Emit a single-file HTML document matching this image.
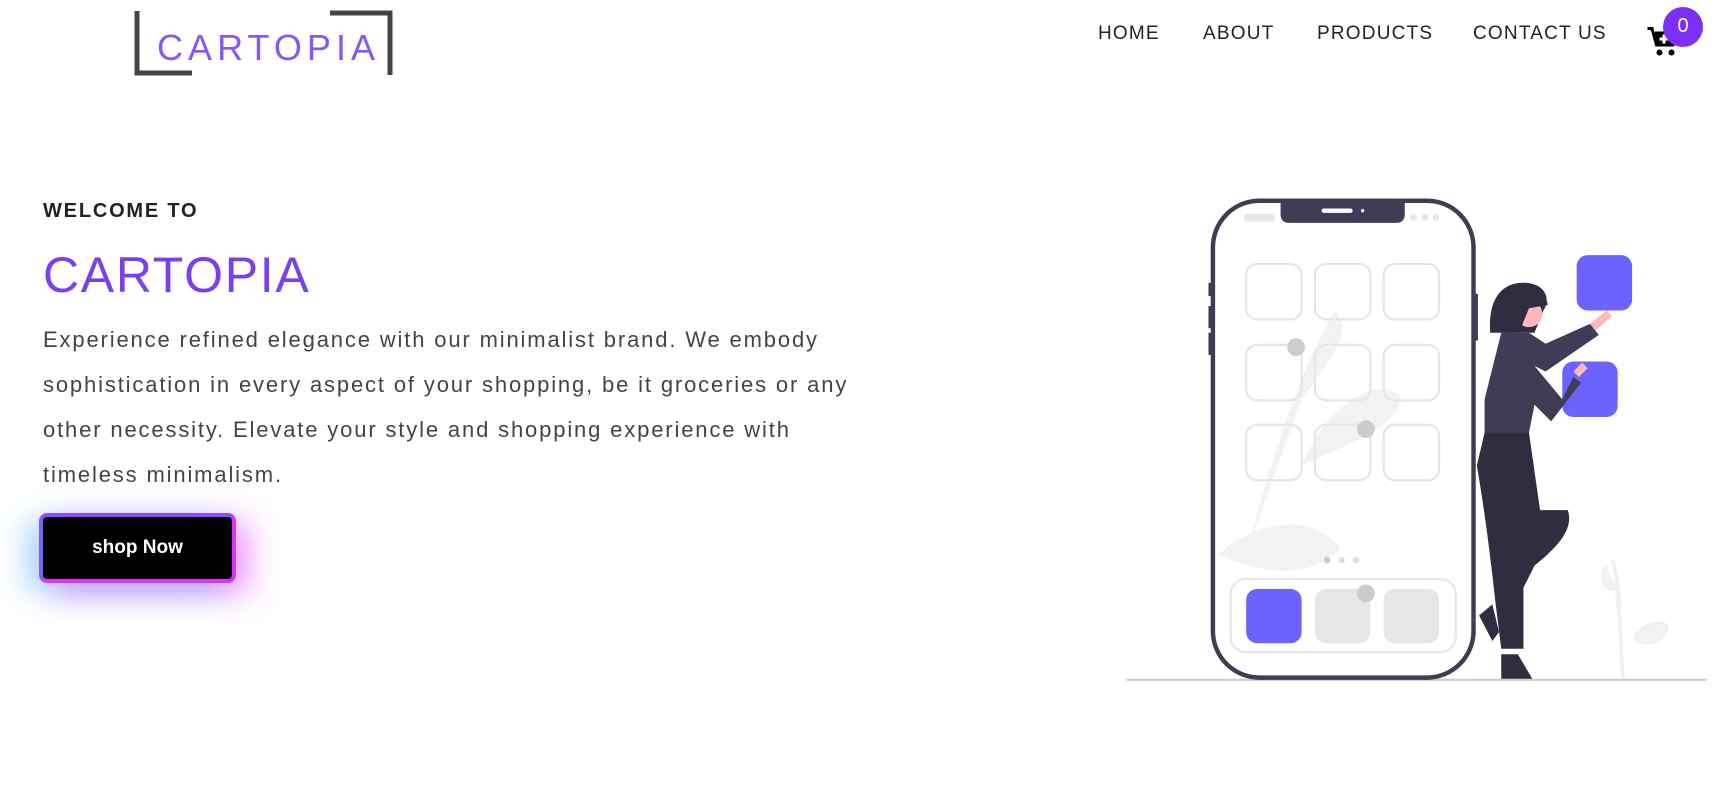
<!DOCTYPE html>
<html><head><meta charset="utf-8"><style>
*{margin:0;padding:0;box-sizing:border-box}
body{width:1730px;height:801px;background:#fff;font-family:"Liberation Sans",sans-serif;position:relative;overflow:hidden}
.nav a{position:absolute;top:23px;font-size:19px;letter-spacing:1.2px;color:#222;text-decoration:none;font-weight:300}
.h5{position:absolute;left:43px;top:200px;font-size:20px;font-weight:bold;letter-spacing:1.8px;color:#222}
.h1{position:absolute;left:43px;top:246px;font-size:50px;letter-spacing:1.7px;color:#7b3ff2}
.p{position:absolute;left:43px;top:317px;width:850px;font-size:22px;line-height:45px;letter-spacing:1.85px;color:#444;font-weight:300}
.btn{position:absolute;left:39px;top:513px;width:197px;height:70px;border-radius:8px;background:#000;border:4px solid;border-color:#8a4dff #e030ff #e030ff #7b5cff;color:#fff;font-weight:bold;font-size:19px;display:flex;align-items:center;justify-content:center;box-shadow:-14px 8px 30px rgba(80,180,255,.45),14px 10px 30px rgba(230,60,255,.5)}
</style></head><body>
<svg style="position:absolute;left:0;top:0" width="1730" height="801">
<path d="M137 11V73H192" fill="none" stroke="#444" stroke-width="5"/>
<path d="M330 13H390V75" fill="none" stroke="#444" stroke-width="5"/>
<text x="157" y="60" font-family="Liberation Sans" font-size="36" fill="#8a55f5" textLength="218" lengthAdjust="spacing">CARTOPIA</text>
<g transform="translate(-7,0) scale(1.109)">
<line x1="1022" y1="613" x2="1545" y2="613" stroke="#ccc" stroke-width="2"/>
<path d="M1130 500 C1150 420 1180 330 1210 280 C1230 300 1200 330 1180 360 M1180 420 C1210 350 1260 340 1270 360 C1260 390 1220 400 1180 420 M1105 500 C1150 460 1200 470 1215 495 C1190 520 1150 520 1105 500" fill="#f2f2f2"/>
<path d="M1470 612 C1465 560 1470 530 1460 505 M1455 510 c-8 10 0 25 8 20 M1480 575 c10 -15 25 -15 30 -10 c-5 15 -20 20 -30 10" fill="#f2f2f2" stroke="#f0f0f0" stroke-width="3"/>
<rect x="1100" y="181" width="235" height="430" rx="42" fill="none" stroke="#3f3d56" stroke-width="4"/>
<rect x="1096" y="255" width="4" height="12" fill="#3f3d56"/><rect x="1096" y="276" width="4" height="20" fill="#3f3d56"/><rect x="1096" y="300" width="4" height="20" fill="#3f3d56"/><rect x="1335" y="265" width="4" height="42" fill="#3f3d56"/>
<path d="M1161 181H1273V193Q1273 201 1265 201H1169Q1161 201 1161 193Z" fill="#3f3d56"/>
<rect x="1198" y="188" width="28" height="4" rx="2" fill="#fff"/><circle cx="1235" cy="190" r="1.5" fill="#fff"/>
<rect x="1128" y="193" width="28" height="7" rx="3" fill="#e6e6e6"/>
<circle cx="1281" cy="196" r="3" fill="#e6e6e6"/><circle cx="1291" cy="196" r="3" fill="#e6e6e6"/><circle cx="1301" cy="196" r="3" fill="#e6e6e6"/>
<g fill="none" stroke="#e6e6e6" stroke-width="2">
<rect x="1130" y="238" width="50" height="50" rx="10"/><rect x="1192" y="238" width="50" height="50" rx="10"/><rect x="1254" y="238" width="50" height="50" rx="10"/>
<rect x="1130" y="311" width="50" height="50" rx="10"/><rect x="1192" y="311" width="50" height="50" rx="10"/><rect x="1254" y="311" width="50" height="50" rx="10"/>
<rect x="1130" y="383" width="50" height="50" rx="10"/><rect x="1192" y="383" width="50" height="50" rx="10"/><rect x="1254" y="383" width="50" height="50" rx="10"/>
<rect x="1116" y="522" width="203" height="66" rx="14"/></g>
<rect x="1130" y="531" width="50" height="49" rx="10" fill="#6c63ff"/><rect x="1192" y="531" width="50" height="49" rx="10" fill="#e6e6e6"/><rect x="1254" y="531" width="50" height="49" rx="10" fill="#e6e6e6"/>
<circle cx="1203" cy="505" r="3" fill="#ccc"/><circle cx="1216" cy="505" r="3" fill="#e0e0e0"/><circle cx="1229" cy="505" r="3" fill="#e0e0e0"/>
<circle cx="1175" cy="313" r="8" fill="#ccc"/><circle cx="1238" cy="387" r="8" fill="#ccc"/><circle cx="1238" cy="535" r="8" fill="#ccc"/>
<rect x="1428" y="230" width="50" height="50" rx="10" fill="#6c63ff"/><rect x="1415" y="326" width="50" height="50" rx="10" fill="#6c63ff"/>
<path d="M1440 292 L1455 280 L1460 285 L1445 298Z" fill="#ffb8b8"/>
<path d="M1425 335 l8 -8 l5 5 l-8 8z" fill="#ffb8b8"/>
<path d="M1350 300 C1348 270 1360 255 1380 255 C1400 255 1405 270 1398 280 L1390 300Z" fill="#2f2e41"/>
<circle cx="1385" cy="283" r="12" fill="#ffb8b8"/>
<path d="M1372 262 C1385 255 1400 262 1402 275 L1385 278 L1376 300 L1360 300Z" fill="#2f2e41"/>
<path d="M1360 300 L1385 300 L1400 310 L1440 292 L1448 302 L1400 335 L1390 330 L1415 360 L1425 340 L1432 345 L1405 380 L1390 365 L1385 390 L1345 390 L1345 360 Z" fill="#3f3d56"/>
<path d="M1345 390 L1385 390 L1395 460 L1420 460 C1425 475 1415 490 1390 510 L1380 530 L1380 585 L1360 585 L1355 545 C1350 500 1345 460 1338 420 Z" fill="#2f2e41"/>
<path d="M1360 590 L1375 590 L1388 612 L1360 612Z M1340 555 L1352 545 L1358 570 L1352 578Z" fill="#2f2e41"/>
</g>
</svg>
<div class="nav"><a style="left:1098px">HOME</a><a style="left:1203px">ABOUT</a><a style="left:1317px">PRODUCTS</a><a style="left:1473px">CONTACT US</a></div>
<svg style="position:absolute;left:1646px;top:24px" width="36" height="36" viewBox="0 0 24 24"><path d="M1 3h3l3 11h11l3-8H6" fill="#000" stroke="#000" stroke-width="2"/><circle cx="9" cy="19" r="2"/><circle cx="17" cy="19" r="2"/><path d="M12 7v6M9 10h6" stroke="#fff" stroke-width="2"/></svg>
<div style="position:absolute;left:1663px;top:7px;width:40px;height:40px;border-radius:50%;background:#7b2ff7;color:#fff;font-size:20px;text-align:center;line-height:38px">0</div>
<div class="h5">WELCOME TO</div>
<div class="h1">CARTOPIA</div>
<div class="p">Experience refined elegance with our minimalist brand. We embody sophistication in every aspect of your shopping, be it groceries or any other necessity. Elevate your style and shopping experience with timeless minimalism.</div>
<div class="btn">shop Now</div>
</body></html>
